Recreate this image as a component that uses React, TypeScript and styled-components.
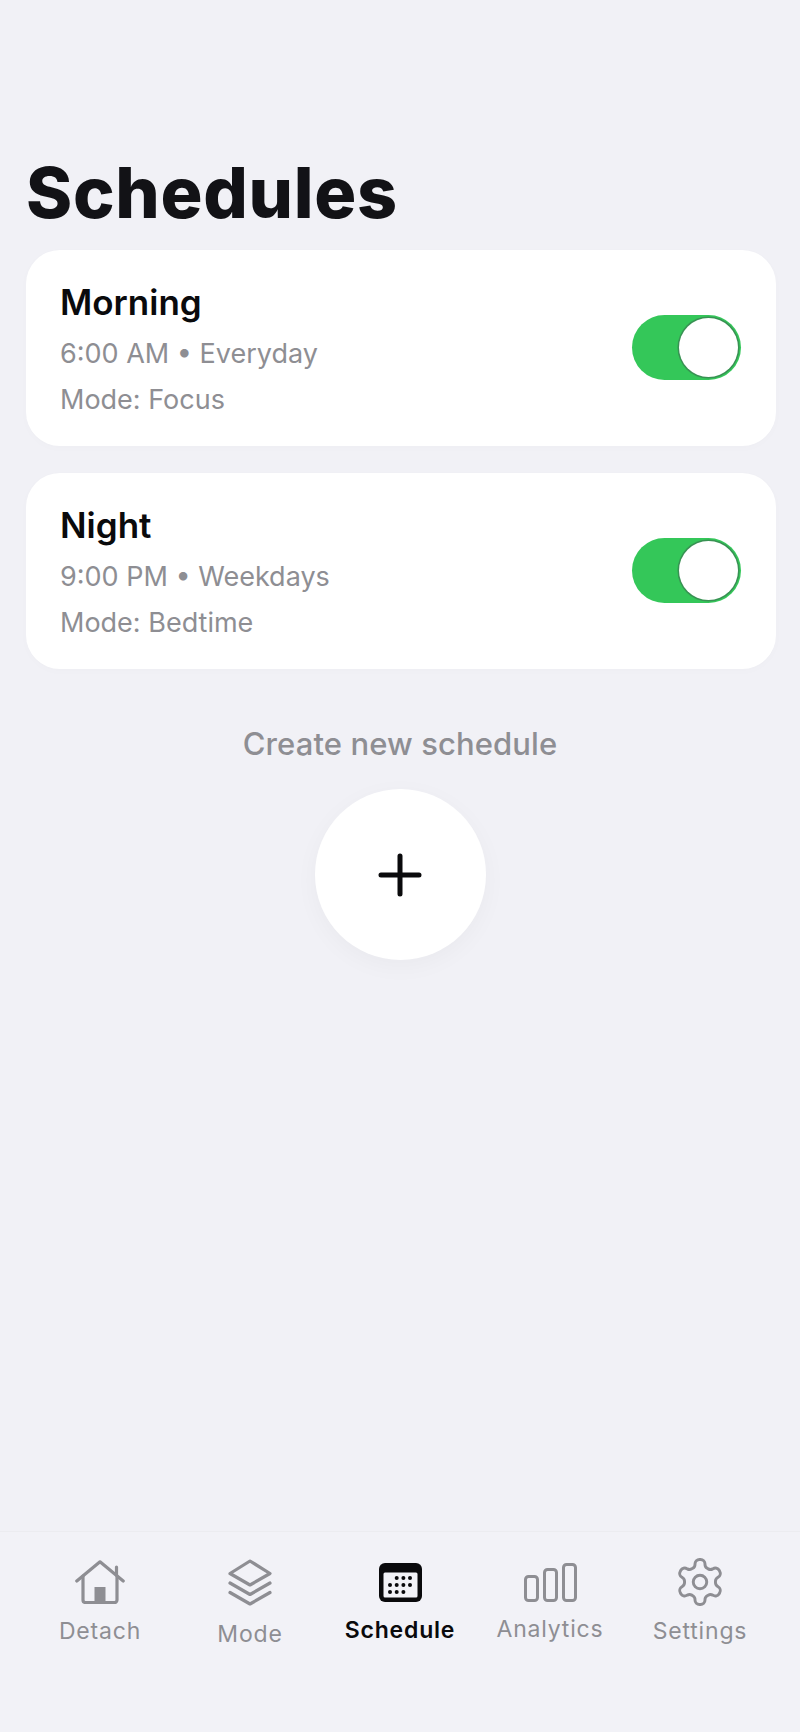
import styled, { createGlobalStyle } from 'styled-components'
import type { ReactNode } from 'react'

const GlobalStyle = createGlobalStyle`
  html, body {
    margin: 0;
    padding: 0;
    background: #f1f1f6;
    font-family: Inter, "Liberation Sans", sans-serif;
  }
`

const Screen = styled.div`
  width: 800px;
  height: 1732px;
  display: flex;
  flex-direction: column;
  background: #f1f1f6;
  overflow: hidden;
`

const Main = styled.main`
  flex: 1;
  display: flex;
  flex-direction: column;
  padding: 155px 24px 0 26px;
`

const Title = styled.h1`
  margin: 0 0 19px;
  font-size: 70px;
  line-height: 76px;
  font-weight: 800;
  letter-spacing: 0.7px;
  color: #121216;
`

const CardList = styled.div`
  display: flex;
  flex-direction: column;
  gap: 27px;
`

const Card = styled.section`
  height: 196px;
  box-sizing: border-box;
  padding: 31px 35px 0 34px;
  display: flex;
  justify-content: space-between;
  background: #fff;
  border-radius: 34px;
  box-shadow: 0 2px 10px rgba(0, 0, 0, 0.015);
`

const CardText = styled.div`
  display: flex;
  flex-direction: column;
`

const CardName = styled.div`
  margin-bottom: 8px;
  font-size: 35px;
  line-height: 42px;
  font-weight: 600;
  color: #0a0a0c;
`

const CardLine = styled.div`
  font-size: 27px;
  line-height: 46px;
  color: #8e8e93;
`

const Toggle = styled.div`
  width: 109px;
  height: 65px;
  margin-top: 34px;
  padding: 3px;
  box-sizing: border-box;
  display: flex;
  justify-content: flex-end;
  background: #34c759;
  border-radius: 33px;
`

const Knob = styled.div`
  width: 59px;
  height: 59px;
  background: #fff;
  border-radius: 50%;
  box-shadow: 0 0 0 1.5px rgba(60, 110, 80, 0.6);
`

const CreateArea = styled.div`
  display: flex;
  flex-direction: column;
  align-items: center;
  margin: 57px 2px 0 0;
`

const CreateLabel = styled.div`
  font-size: 31px;
  line-height: 36px;
  font-weight: 500;
  letter-spacing: 0.1px;
  color: #8e8e93;
`

const AddButton = styled.button`
  width: 171px;
  height: 171px;
  margin-top: 27px;
  padding: 0;
  border: none;
  border-radius: 50%;
  display: flex;
  align-items: center;
  justify-content: center;
  background: #fff;
  box-shadow: 0 6px 24px rgba(0, 0, 0, 0.035);
`

const TabBar = styled.nav`
  height: 201px;
  box-sizing: border-box;
  padding: 26px 25px 0;
  display: grid;
  grid-template-columns: repeat(5, 150px);
  background: #f2f2f7;
  border-top: 1px solid #ececf0;
`

const Tab = styled.div`
  display: flex;
  flex-direction: column;
  align-items: center;
`

const IconBox = styled.div`
  height: 48px;
  display: flex;
  align-items: center;
  justify-content: center;
`

const TabLabel = styled.span<{ $active?: boolean; $gap: number }>`
  margin-top: ${({ $gap }) => $gap}px;
  font-size: 23px;
  line-height: 30px;
  font-weight: ${({ $active }) => ($active ? 600 : 400)};
  letter-spacing: 0.8px;
  color: ${({ $active }) => ($active ? '#0a0a0c' : '#8e8e93')};
`

const PlusIcon = () => (
  <svg width="44" height="44" viewBox="0 0 44 44" fill="none" stroke="#0a0a0c" strokeWidth="5" strokeLinecap="round">
    <path d="M22 3v38M3 22h38" />
  </svg>
)

const HomeIcon = () => (
  <svg width="50" height="44" viewBox="0 0 50 44" fill="none" stroke="#8e8e93" strokeWidth="3.2" strokeLinecap="round" strokeLinejoin="round">
    <path d="M1.8 21 25 1.8 48.2 21" />
    <path d="M41.5 14.5V7" />
    <path d="M8 16v24a2.5 2.5 0 0 0 2.5 2.5h29a2.5 2.5 0 0 0 2.5-2.5V16" />
    <rect x="19.5" y="27" width="11" height="15" fill="#8e8e93" stroke="none" />
  </svg>
)

const LayersIcon = () => (
  <svg width="44" height="47" viewBox="0 0 44 47" fill="none" stroke="#8e8e93" strokeWidth="3.2" strokeLinecap="round" strokeLinejoin="round">
    <path d="M22 2 42 14.5 22 26 2 14.5Z" />
    <path d="M2 24 22 35.5 42 24" />
    <path d="M2 33.5 22 45 42 33.5" />
  </svg>
)

const CalendarIcon = () => (
  <svg width="43" height="39" viewBox="0 0 43 39">
    <rect x="0" y="0" width="43" height="39" rx="6" fill="#0a0a0c" />
    <rect x="4.5" y="9.5" width="34" height="25" rx="1.5" fill="#f2f2f7" />
    <g fill="#0a0a0c">
      {[17.7, 24.4, 31].map((cx) => <circle key={cx} cx={cx} cy="15" r="2" />)}
      {[11, 17.7, 24.4, 31].map((cx) => <circle key={cx} cx={cx} cy="22" r="2" />)}
      {[11, 17.7, 24.4].map((cx) => <circle key={cx} cx={cx} cy="29" r="2" />)}
    </g>
  </svg>
)

const BarsIcon = () => (
  <svg width="53" height="39" viewBox="0 0 53 39" fill="none" stroke="#8e8e93" strokeWidth="3">
    <rect x="1.5" y="13.5" width="12" height="24" rx="3" />
    <rect x="20.5" y="6.5" width="12" height="31" rx="3" />
    <rect x="39.5" y="1.5" width="12" height="36" rx="3" />
  </svg>
)

const GearIcon = () => (
  <svg width="54" height="54" viewBox="0 0 24 24" fill="none" stroke="#8e8e93" strokeWidth="1.3" strokeLinecap="round" strokeLinejoin="round">
    <path d="M12.22 2h-.44a2 2 0 0 0-2 2v.18a2 2 0 0 1-1 1.73l-.43.25a2 2 0 0 1-2 0l-.15-.08a2 2 0 0 0-2.73.73l-.22.38a2 2 0 0 0 .73 2.73l.15.1a2 2 0 0 1 1 1.72v.51a2 2 0 0 1-1 1.74l-.15.09a2 2 0 0 0-.73 2.73l.22.38a2 2 0 0 0 2.73.73l.15-.08a2 2 0 0 1 2 0l.43.25a2 2 0 0 1 1 1.73V20a2 2 0 0 0 2 2h.44a2 2 0 0 0 2-2v-.18a2 2 0 0 1 1-1.73l.43-.25a2 2 0 0 1 2 0l.15.08a2 2 0 0 0 2.73-.73l.22-.39a2 2 0 0 0-.73-2.73l-.15-.08a2 2 0 0 1-1-1.74v-.5a2 2 0 0 1 1-1.74l.15-.09a2 2 0 0 0 .73-2.73l-.22-.38a2 2 0 0 0-2.73-.73l-.15.08a2 2 0 0 1-2 0l-.43-.25a2 2 0 0 1-1-1.73V4a2 2 0 0 0-2-2z" />
    <circle cx="12" cy="12" r="3" />
  </svg>
)

const schedules = [
  { name: 'Morning', time: '6:00 AM • Everyday', mode: 'Mode: Focus' },
  { name: 'Night', time: '9:00 PM • Weekdays', mode: 'Mode: Bedtime' },
]

const tabs: { label: string; icon: ReactNode; gap: number; active?: boolean }[] = [
  { label: 'Detach', icon: <HomeIcon />, gap: 10 },
  { label: 'Mode', icon: <LayersIcon />, gap: 13 },
  { label: 'Schedule', icon: <CalendarIcon />, gap: 9, active: true },
  { label: 'Analytics', icon: <BarsIcon />, gap: 8 },
  { label: 'Settings', icon: <GearIcon />, gap: 10 },
]

export default function App() {
  return (
    <>
      <GlobalStyle />
      <Screen>
        <Main>
          <Title>Schedules</Title>
          <CardList>
            {schedules.map((s) => (
              <Card key={s.name}>
                <CardText>
                  <CardName>{s.name}</CardName>
                  <CardLine>{s.time}</CardLine>
                  <CardLine>{s.mode}</CardLine>
                </CardText>
                <Toggle>
                  <Knob />
                </Toggle>
              </Card>
            ))}
          </CardList>
          <CreateArea>
            <CreateLabel>Create new schedule</CreateLabel>
            <AddButton aria-label="Create new schedule">
              <PlusIcon />
            </AddButton>
          </CreateArea>
        </Main>
        <TabBar>
          {tabs.map((t) => (
            <Tab key={t.label}>
              <IconBox>{t.icon}</IconBox>
              <TabLabel $active={t.active} $gap={t.gap}>{t.label}</TabLabel>
            </Tab>
          ))}
        </TabBar>
      </Screen>
    </>
  )
}
